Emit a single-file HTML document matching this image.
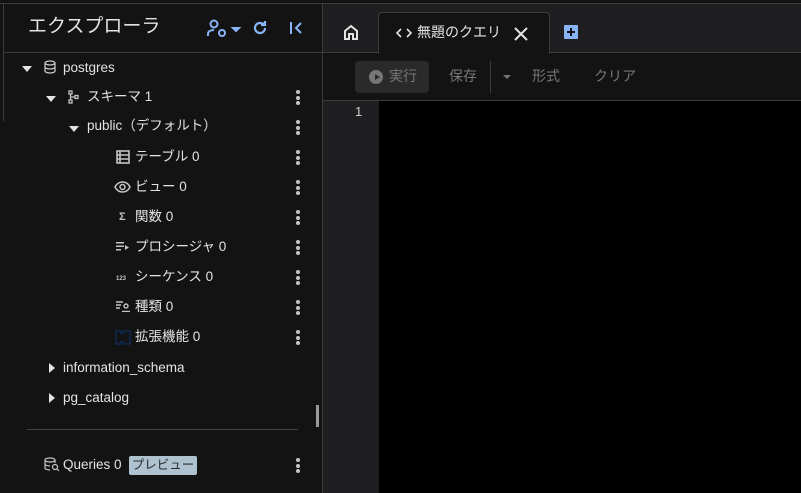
<!DOCTYPE html>
<html><head><meta charset="utf-8"><style>
*{box-sizing:border-box;margin:0;padding:0}
body{width:801px;height:493px;overflow:hidden;background:#131313;font-family:"Liberation Sans","Noto Sans CJK JP",sans-serif;color:#e3e3e3;position:relative}
.a{position:absolute}
.t{font-size:13.5px;color:#e3e3e3;white-space:nowrap;line-height:16px}
.dots{position:absolute;left:296px;width:4px}
.dots i{display:block;width:4px;height:4px;border-radius:2px;background:#c4c4c4;margin-bottom:1.5px}
.tri{position:absolute;width:0;height:0;border-left:5px solid transparent;border-right:5px solid transparent;border-top:6px solid #e3e3e3}
.trr{position:absolute;width:0;height:0;border-top:5px solid transparent;border-bottom:5px solid transparent;border-left:6px solid #e3e3e3}
.ic{position:absolute;color:#c4c4c4;line-height:12px}
</style></head><body>
<div class="a" style="left:0;top:3px;width:801px;height:1px;background:#3c3c3c"></div>
<div class="a" style="left:3px;top:3px;width:1px;height:118px;background:#3c3c3c"></div>
<div class="a" style="left:322px;top:3px;width:1px;height:490px;background:#3c3c3c"></div>
<div class="a" style="left:4px;top:52px;width:318px;height:1px;background:#3c3c3c"></div>
<div class="a t" style="left:28px;top:16px;font-size:19px;line-height:22px;color:#e3e3e3">エクスプローラ</div>
<svg class="a" style="left:206px;top:19px" width="40" height="22" viewBox="0 0 40 22" fill="none" stroke="#8ab4f8" stroke-width="2"><circle cx="8" cy="5" r="3.5"/><path d="M2 17v-2c0-3 3-4 6-4"/><circle cx="16" cy="14" r="3"/><path d="M27 9l3 3 3-3z" fill="#8ab4f8"/></svg>
<svg class="a" style="left:251px;top:19px" width="18" height="18" viewBox="0 0 18 18" fill="none" stroke="#8ab4f8" stroke-width="2.2"><path d="M14 9a5 5 0 1 1-1.5-3.6"/><path d="M14 2v4h-4" fill="#8ab4f8"/></svg>
<svg class="a" style="left:288px;top:20px" width="16" height="16" viewBox="0 0 16 16" fill="none" stroke="#8ab4f8" stroke-width="2"><path d="M3 2v12M13 3l-5 5 5 5"/></svg>

<div class="tri" style="left:22px;top:66px"></div>
<svg class="a" style="left:44px;top:60px" width="12" height="14" viewBox="0 0 12 14" fill="none" stroke="#c4c4c4" stroke-width="1.3"><ellipse cx="6" cy="3" rx="5" ry="2"/><path d="M1 3v8c0 1 2 2 5 2s5-1 5-2V3M1 7c0 1 2 2 5 2s5-1 5-2"/></svg>
<div class="a t" style="left:63px;top:60px">postgres</div>

<div class="tri" style="left:46px;top:96px"></div>
<svg class="a" style="left:68px;top:90px" width="11" height="14" viewBox="0 0 11 14" fill="none" stroke="#c4c4c4" stroke-width="1.3"><rect x="1" y="1" width="3" height="3"/><rect x="1" y="10" width="3" height="3"/><rect x="7" y="5.5" width="3" height="3"/><path d="M2.5 4v6M2.5 7h4.5"/></svg>
<div class="a t" style="left:87px;top:89px">スキーマ 1</div>
<div class="dots" style="top:90px"><i></i><i></i><i></i></div>

<div class="tri" style="left:69px;top:126px"></div>
<div class="a t" style="left:87px;top:118px">public（デフォルト）</div>
<div class="dots" style="top:120px"><i></i><i></i><i></i></div>

<svg class="a" style="left:116px;top:150px" width="14" height="14" viewBox="0 0 14 14" fill="none" stroke="#c4c4c4" stroke-width="1.6"><rect x="1" y="1" width="12" height="12"/><path d="M1 5h12M1 9h12M4 1v12"/></svg>
<div class="a t" style="left:135px;top:149px">テーブル 0</div>
<div class="dots" style="top:150px"><i></i><i></i><i></i></div>

<svg class="a" style="left:114px;top:181px" width="17" height="12" viewBox="0 0 17 12" fill="none" stroke="#c4c4c4" stroke-width="1.5"><path d="M1 6c2-4 5-5 7.5-5S14 2 16 6c-2 4-5 5-7.5 5S3 10 1 6z"/><circle cx="8.5" cy="6" r="2.5"/></svg>
<div class="a t" style="left:135px;top:179px">ビュー 0</div>
<div class="dots" style="top:180px"><i></i><i></i><i></i></div>

<div class="ic" style="left:119px;top:211px;font-size:11px;font-weight:bold">Σ</div>
<div class="a t" style="left:135px;top:209px">関数 0</div>
<div class="dots" style="top:210px"><i></i><i></i><i></i></div>

<svg class="a" style="left:116px;top:242px" width="13" height="9" viewBox="0 0 13 9" fill="#c4c4c4"><rect x="0" y="0" width="8" height="1.5"/><rect x="0" y="3.5" width="8" height="1.5"/><rect x="0" y="7" width="5" height="1.5"/><path d="M9 3l4 2.5L9 8z"/></svg>
<div class="a t" style="left:135px;top:239px">プロシージャ 0</div>
<div class="dots" style="top:240px"><i></i><i></i><i></i></div>

<div class="ic" style="left:116px;top:273px;font-size:6px;font-weight:bold">123</div>
<div class="a t" style="left:135px;top:269px">シーケンス 0</div>
<div class="dots" style="top:270px"><i></i><i></i><i></i></div>

<svg class="a" style="left:116px;top:301px" width="14" height="11" viewBox="0 0 14 11" fill="none" stroke="#c4c4c4" stroke-width="1.4"><path d="M0 1h7M0 4h5M0 7h4"/><circle cx="10" cy="5" r="2"/><path d="M6 10.5h8"/></svg>
<div class="a t" style="left:135px;top:299px">種類 0</div>
<div class="dots" style="top:300px"><i></i><i></i><i></i></div>

<svg class="a" style="left:115px;top:330px" width="16" height="15" viewBox="0 0 16 15" fill="none" stroke="#0d2a52" stroke-width="1.5"><path d="M1 1h5v2h3V1h6v13H9v-2H6v2H1z"/></svg>
<div class="a t" style="left:135px;top:329px">拡張機能 0</div>
<div class="dots" style="top:330px"><i></i><i></i><i></i></div>

<div class="trr" style="left:49px;top:363px"></div>
<div class="a t" style="left:63px;top:360px">information_schema</div>
<div class="trr" style="left:49px;top:393px"></div>
<div class="a t" style="left:63px;top:390px">pg_catalog</div>

<div class="a" style="left:316px;top:405px;width:3px;height:22px;background:#9a9a9a"></div>
<div class="a" style="left:27px;top:429px;width:271px;height:1px;background:#444"></div>

<svg class="a" style="left:44px;top:457px" width="16" height="15" viewBox="0 0 16 15" fill="none" stroke="#c4c4c4" stroke-width="1.2"><ellipse cx="6" cy="3" rx="5" ry="2"/><path d="M1 3v8c0 1 2 2 5 2M11 3v3M1 7c0 1 2 2 5 2"/><circle cx="11" cy="10" r="2.5"/><path d="M13 12l2 2"/></svg>
<div class="a t" style="left:63px;top:457px">Queries 0</div>
<div class="a" style="left:129px;top:456px;width:68px;height:19px;background:#aec2cf;border-radius:2px;color:#2b2b2b;font-size:12.5px;text-align:center;line-height:19px">プレビュー</div>
<div class="dots" style="top:458px"><i></i><i></i><i></i></div>

<div class="a" style="left:323px;top:4px;width:478px;height:48px;background:#1f1f21"></div>
<div class="a" style="left:323px;top:52px;width:478px;height:1px;background:#3c3c3c"></div>
<div class="a" style="left:378px;top:12px;width:172px;height:42px;background:#131313;border:1px solid #3c3c3c;border-bottom:none;border-radius:4px 4px 0 0"></div>
<svg class="a" style="left:343px;top:24px" width="16" height="17" viewBox="0 0 16 17" fill="none" stroke="#e3e3e3" stroke-width="2"><path d="M2 7l6-5 6 5v8h-4v-5H6v5H2z"/></svg>
<svg class="a" style="left:396px;top:28px" width="16" height="10" viewBox="0 0 16 10" fill="none" stroke="#e3e3e3" stroke-width="1.6"><path d="M5 1L1 5l4 4M11 1l4 4-4 4"/></svg>
<div class="a t" style="left:417px;top:24px;font-size:14px">無題のクエリ</div>
<svg class="a" style="left:514px;top:27px" width="14" height="14" viewBox="0 0 14 14" stroke="#e3e3e3" stroke-width="2"><path d="M1 1l12 12M13 1L1 13"/></svg>
<div class="a" style="left:564px;top:25px;width:14px;height:14px;background:#8ab4f8;border-radius:1px"></div>
<svg class="a" style="left:564px;top:25px" width="14" height="14" viewBox="0 0 14 14" stroke="#131313" stroke-width="2"><path d="M7 3v8M3 7h8"/></svg>

<div class="a" style="left:355px;top:61px;width:74px;height:32px;background:#2a2a2a;border-radius:4px"></div>
<div class="a" style="left:369px;top:70px;width:14px;height:14px;border-radius:7px;background:#777"></div>
<div class="a" style="left:375px;top:74px;width:0;height:0;border-top:3px solid transparent;border-bottom:3px solid transparent;border-left:5px solid #2a2a2a"></div>
<div class="a t" style="left:389px;top:68px;color:#777;font-size:14px">実行</div>
<div class="a t" style="left:449px;top:68px;color:#777;font-size:14px">保存</div>
<div class="a" style="left:490px;top:61px;width:1px;height:32px;background:#3c3c3c"></div>
<div class="a" style="left:503px;top:75px;width:0;height:0;border-left:4px solid transparent;border-right:4px solid transparent;border-top:4px solid #777"></div>
<div class="a t" style="left:532px;top:68px;color:#777;font-size:14px">形式</div>
<div class="a t" style="left:594px;top:68px;color:#777;font-size:14px">クリア</div>

<div class="a" style="left:323px;top:100px;width:478px;height:1px;background:#3c3c3c"></div>
<div class="a" style="left:323px;top:101px;width:56px;height:392px;background:#1f1f21"></div>
<div class="a" style="left:379px;top:101px;width:422px;height:392px;background:#000"></div>
<div class="a t" style="left:355px;top:104px;color:#ccc;font-size:13px">1</div>
</body></html>
